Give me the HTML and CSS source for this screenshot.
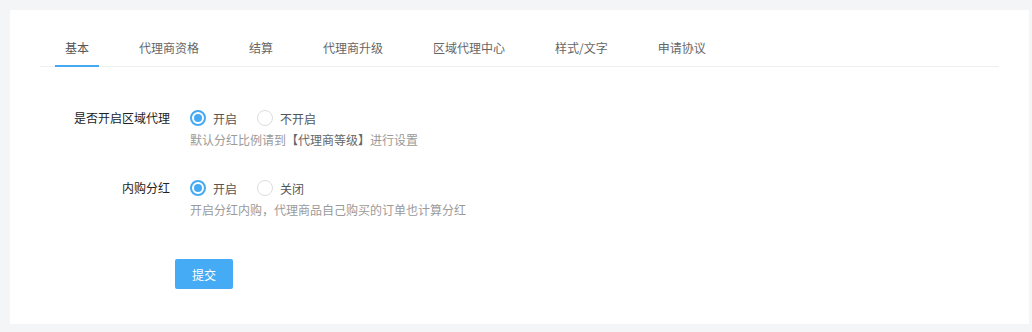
FILE: index.html
```html
<!DOCTYPE html>
<html lang="zh-CN">
<head>
    <meta charset="UTF-8">
    <meta name="viewport" content="width=device-width, initial-scale=1.0">
    <title>区域代理设置</title>
    <link rel="stylesheet" href="styles.css">
</head>
<body>
    <div class="card">
        <ul class="tabs">
            <li class="tab active">基本</li>
            <li class="tab">代理商资格</li>
            <li class="tab">结算</li>
            <li class="tab">代理商升级</li>
            <li class="tab">区域代理中心</li>
            <li class="tab">样式/文字</li>
            <li class="tab">申请协议</li>
        </ul>

        <form class="form">
            <div class="form-item">
                <label class="form-label">是否开启区域代理</label>
                <div class="form-field">
                    <div class="radios">
                        <label class="radio"><input type="radio" name="area" checked><span class="dot"></span>开启</label>
                        <label class="radio"><input type="radio" name="area"><span class="dot"></span>不开启</label>
                    </div>
                    <div class="help">默认分红比例请到<b>【代理商等级】</b>进行设置</div>
                </div>
            </div>

            <div class="form-item">
                <label class="form-label">内购分红</label>
                <div class="form-field">
                    <div class="radios">
                        <label class="radio"><input type="radio" name="inner" checked><span class="dot"></span>开启</label>
                        <label class="radio"><input type="radio" name="inner"><span class="dot"></span>关闭</label>
                    </div>
                    <div class="help">开启分红内购，代理商品自己购买的订单也计算分红</div>
                </div>
            </div>

            <button type="button" class="btn-submit">提交</button>
        </form>
    </div>
</body>
</html>
```

FILE: styles.css
```css
body {
    margin: 0;
    padding: 10px 3px 8px 10px;
    background-color: #f4f5f7;
    font-family: "Noto Sans CJK SC", "Noto Sans", sans-serif;
    font-size: 12px;
    color: #333;
}
.card {
    background-color: #fff;
    padding: 20px 30px 0 30px;
    height: 314px;
    box-sizing: border-box;
}
.tabs {
    list-style: none;
    margin: 0;
    padding: 0 0 0 15px;
    display: flex;
    border-bottom: 1px solid #eee;
}
.tab {
    padding: 0 10px;
    margin-right: 30px;
    line-height: 36px;
    height: 37px;
    color: #666;
    border-bottom: 2px solid transparent;
    margin-bottom: -1px;
    box-sizing: border-box;
}
.tab.active {
    color: #555;
    border-bottom-color: #45aaf2;
}
.form {
    padding-top: 39px;
}
.form-item {
    display: flex;
    margin-bottom: 26px;
}
.form-label {
    width: 130px;
    text-align: right;
    line-height: 24px;
    padding-right: 20px;
    color: #222;
}
.radios {
    display: flex;
    height: 24px;
    align-items: center;
}
.radio {
    display: flex;
    align-items: center;
    margin-right: 20px;
    color: #555;
}
.radio input {
    display: none;
}
.dot {
    width: 16px;
    height: 16px;
    border: 1px solid #ddd;
    border-radius: 50%;
    box-sizing: border-box;
    margin-right: 7px;
    position: relative;
}
.radio input:checked + .dot {
    border: 2px solid #45aaf2;
}
.radio input:checked + .dot::after {
    content: "";
    position: absolute;
    left: 2px;
    top: 2px;
    width: 8px;
    height: 8px;
    border-radius: 50%;
    background-color: #45aaf2;
}
.help {
    line-height: 20px;
    color: #9a9a9a;
}
.help b {
    color: #666;
    font-weight: normal;
}
.btn-submit {
    margin: 13px 0 0 135px;
    width: 58px;
    height: 30px;
    border: none;
    border-radius: 2px;
    background-color: #45abf5;
    color: #fff;
    font-family: inherit;
    font-size: 12px;
}
```
